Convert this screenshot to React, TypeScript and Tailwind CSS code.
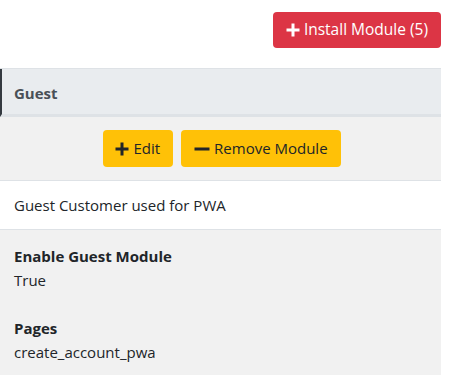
import React from "react";

const Plus = ({ c }: { c: string }) => (
  <svg width="14" height="14" viewBox="0 0 14 14" className="mr-1">
    <rect x="5.5" y="0.5" width="3" height="13" fill={c} />
    <rect x="0.5" y="5.5" width="13" height="3" fill={c} />
  </svg>
);
const Minus = ({ c }: { c: string }) => (
  <svg width="16" height="14" viewBox="0 0 16 14" className="mr-1">
    <rect x="0.5" y="5.5" width="15" height="3" fill={c} />
  </svg>
);

export default function App() {
  return (
    <div
      className="w-[451px] h-[387px] bg-white text-[#212529] text-[15px]"
      style={{ fontFamily: '"Open Sans", "Noto Sans", sans-serif' }}
    >
      <div className="w-[441px]">
        <div className="flex justify-end pt-[12px] pb-[20px]">
          <button className="h-[36px] px-[13px] flex items-center bg-[#dc3545] text-white rounded-[4px] text-[15.5px]">
            <Plus c="#ffffff" />
            Install Module (5)
          </button>
        </div>
        <div className="border-t border-[#dee2e6]">
          <div className="h-[48px] bg-[#e9ecef] border-l-2 border-[#343a40] border-b-[3px] border-b-[#dee2e6] flex items-center pl-[12px] pt-[3px] font-bold text-[#495057]">
            Guest
          </div>
          <div className="h-[64px] bg-[#f1f1f1] border-b border-[#dee2e6] flex items-center justify-center gap-[8px] pl-[3px]">
            <button className="h-[37px] px-[12.5px] flex items-center bg-[#ffc107] rounded-[4px] text-[#212529]">
              <Plus c="#212529" />
              Edit
            </button>
            <button className="h-[37px] px-[13.5px] flex items-center bg-[#ffc107] rounded-[4px] text-[#212529]">
              <Minus c="#212529" />
              Remove Module
            </button>
          </div>
          <div className="h-[49px] bg-white border-b border-[#dee2e6] flex items-center pl-[14px]">
            Guest Customer used for PWA
          </div>
          <div className="h-[145px] bg-[#f1f1f1] pl-[14px] pt-[14px]">
            <div className="font-bold leading-[24px]">Enable Guest Module</div>
            <div className="leading-[24px]">True</div>
            <div className="font-bold leading-[24px] mt-[24px]">Pages</div>
            <div className="leading-[24px]">create_account_pwa</div>
          </div>
        </div>
      </div>
    </div>
  );
}
